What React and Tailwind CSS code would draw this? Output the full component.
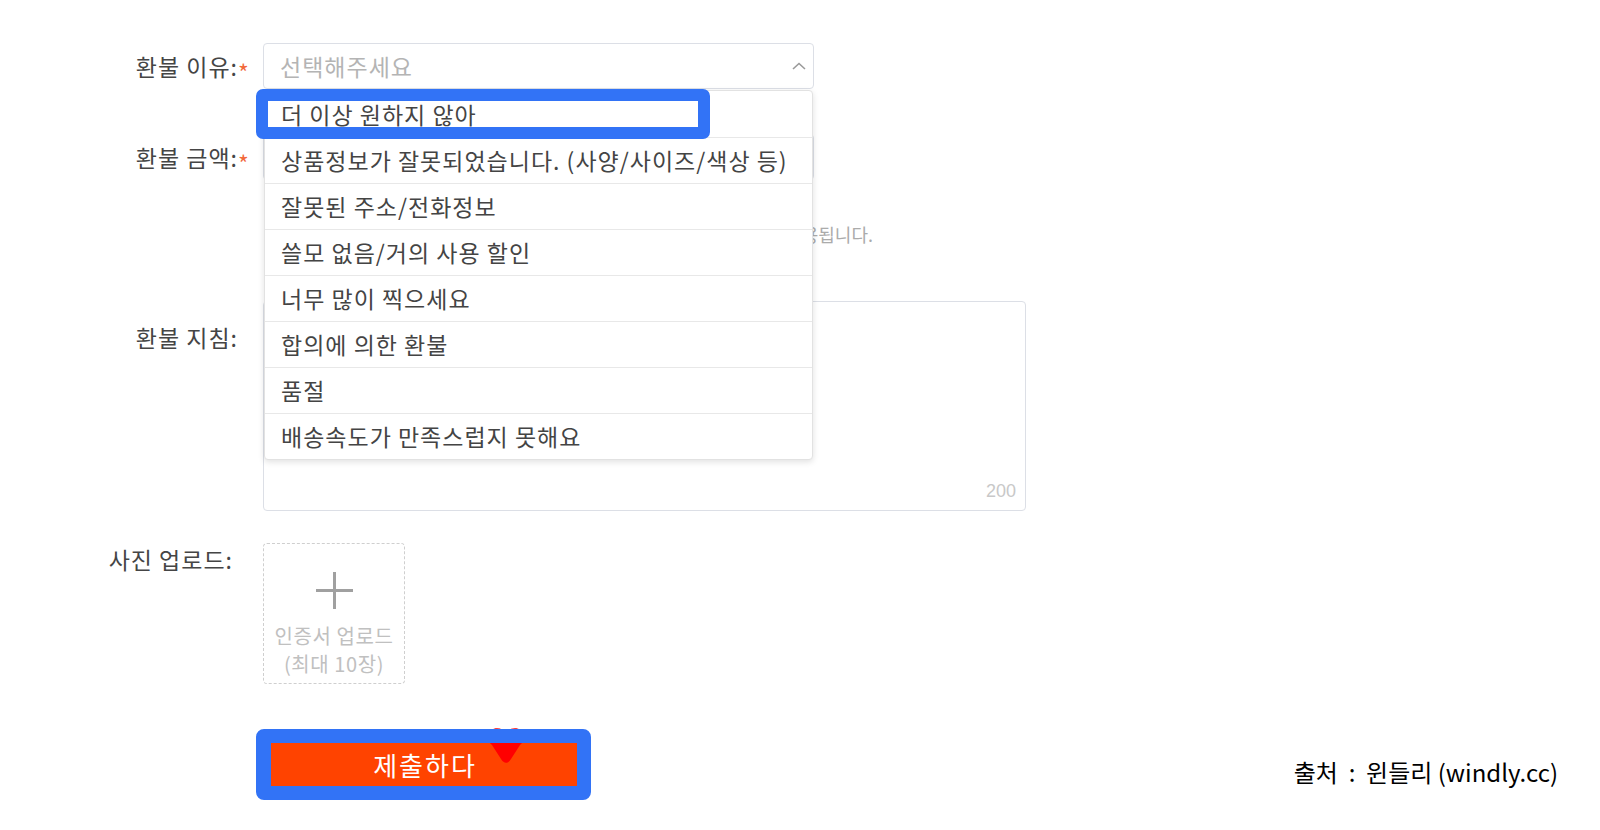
import React from 'react';

const reasons = [
  '더 이상 원하지 않아',
  '상품정보가 잘못되었습니다. (사양/사이즈/색상 등)',
  '잘못된 주소/전화정보',
  '쓸모 없음/거의 사용 할인',
  '너무 많이 찍으세요',
  '합의에 의한 환불',
  '품절',
  '배송속도가 만족스럽지 못해요',
];

const Label = ({ children, required, className = '' }) => (
  <div className={`w-[238px] shrink-0 text-right text-[23px] tracking-[1px] text-[#454545] ${className}`}>
    <span className="relative">
      {children}
      {required && <span className="absolute left-full top-0 text-[#f2693a]">*</span>}
    </span>
  </div>
);

export default function App() {
  return (
    <div className="flex h-[830px] items-end justify-between bg-white font-['Noto_Sans_CJK_KR',sans-serif]">
      <div className="self-start pt-[43px]">
        {/* reason select with open dropdown */}
        <div className="flex items-center gap-[25px]">
          <Label required className="leading-[46px]">환불 이유:</Label>
          <div className="relative">
            <div className="flex h-[46px] w-[551px] items-center justify-between rounded-[4px] border border-[#dcdfe6] pl-4 pr-[7px]">
              <span className="text-[23px] tracking-[1px] text-[#b4b4b4]">선택해주세요</span>
              <svg width="14" height="8" viewBox="0 0 14 8" fill="none">
                <path d="M1 7L7 1.5L13 7" stroke="#9a9a9a" strokeWidth="1.6" />
              </svg>
            </div>
            <div className="absolute left-[1px] top-[47px] z-10 w-[549px] rounded-[4px] border border-[#e2e2e2] bg-white shadow-[0_2px_6px_rgba(0,0,0,0.12)]">
              {reasons.map((r, i) => (
                <div
                  key={r}
                  className={`flex h-[46px] items-center whitespace-nowrap px-4 text-[23px] tracking-[1px] text-[#444] ${i ? 'border-t border-[#e8e8e8]' : ''}`}
                >
                  {r}
                </div>
              ))}
            </div>
            <div className="pointer-events-none absolute -left-[7px] top-[46px] z-20 h-[50px] w-[454px] rounded-[7px] border-[12px] border-[#3273f6]" />
          </div>
        </div>

        {/* amount */}
        <div className="mt-[45px] flex items-start gap-[25px]">
          <Label required className="leading-[46px]">환불 금액:</Label>
          <div>
            <div className="h-[46px] w-[551px] rounded-[4px] border border-[#dcdfe6]" />
            <div className="mt-[42px] w-[610px] overflow-hidden whitespace-nowrap text-right text-[18px] leading-[24px] text-[#ababab]">
              환불 금액은 실제 결제 금액을 초과할 수 없으며 배송비는 별도로 적용됩니다.
            </div>
          </div>
        </div>

        {/* guide textarea */}
        <div className="mt-[55px] flex items-start gap-[25px]">
          <Label className="pt-[20px] leading-[32px]">환불 지침:</Label>
          <div className="relative h-[210px] w-[763px] rounded-[4px] border border-[#dcdfe6]">
            <span className="absolute bottom-[9px] right-[9px] font-['Liberation_Sans',sans-serif] text-[18px] leading-[20px] text-[#c8c8c8]">200</span>
          </div>
        </div>

        {/* photo upload */}
        <div className="mt-[32px] flex items-start gap-[25px]">
          <Label className="pr-[5px] leading-[32px]">사진 업로드:</Label>
          <div className="flex h-[141px] w-[142px] flex-col items-center rounded-[4px] border border-dashed border-[#cfcfcf] pt-[27px]">
            <svg width="39" height="39" viewBox="0 0 39 39">
              <path d="M19.5 1V38M1 19.5H38" stroke="#a0a0a0" strokeWidth="3" />
            </svg>
            <div className="mt-[12px] whitespace-nowrap text-center text-[20px] leading-[28px] tracking-[0.6px] text-[#c0c0c0]">
              인증서 업로드
              <br />
              (최대 10장)
            </div>
          </div>
        </div>

        {/* submit */}
        <div className="mt-[45px] pl-[256px]">
          <div className="relative w-[335px] border-[14px] border-l-[15px] border-transparent">
            <button className="flex h-[43px] w-full items-center justify-center bg-[#ff4300] pl-[2px] text-[26px] tracking-[2px] text-white">
              제출하다
            </button>
            <svg
              className="absolute left-[215px] top-[-15px] z-10"
              width="40"
              height="36"
              viewBox="0 0 40 36"
            >
              <path
                d="M20 5C17 0 10 -1 5 2C0 6 1 13 6 17L15 31C18 36 22 36 25 31L34 17C39 13 40 6 35 2C30 -1 23 0 20 5Z"
                fill="#ff0000"
              />
            </svg>
            <div className="pointer-events-none absolute -inset-[14px] -left-[15px] z-20 rounded-[8px] border-[14px] border-l-[15px] border-[#3273f6]" />
          </div>
        </div>
      </div>

      <div className="whitespace-pre pb-[44px] pr-[42px] text-[24px] leading-[28px] text-black">
        출처  :  윈들리 (windly.cc)
      </div>
    </div>
  );
}
